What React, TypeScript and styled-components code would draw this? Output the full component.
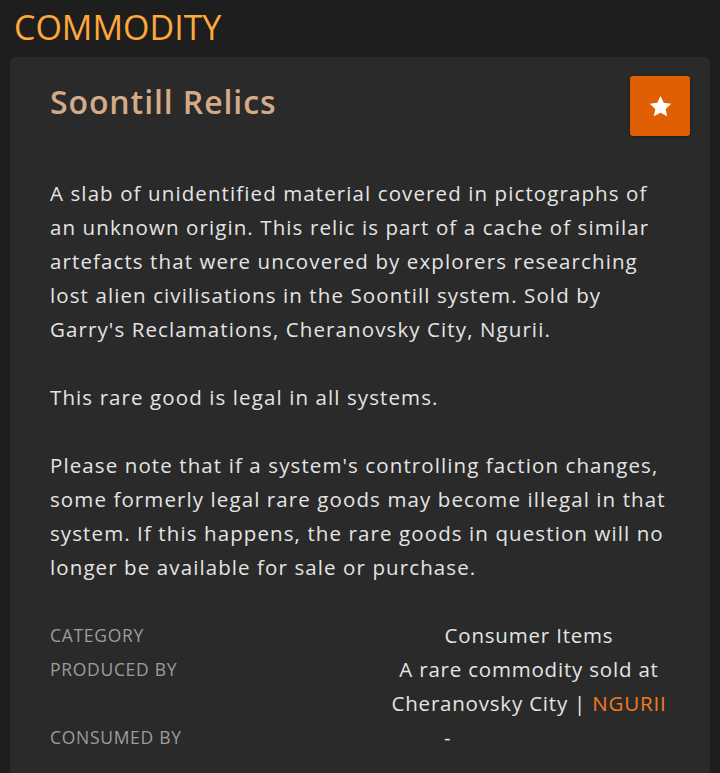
import React from "react";
import styled, {createGlobalStyle} from "styled-components";

const GlobalStyle = createGlobalStyle`
  html, body {
    margin: 0;
    padding: 0;
    background: #1e1e1e;
  }
  body {
    font-family: "Open Sans", "Noto Sans", sans-serif;
  }
`

const StarIcon = () => (
    <svg width="25" height="25" viewBox="0 0 24 24" fill="#ffffff">
        <path d="M12 1.8l3.1 6.6 7.2.9-5.3 5 1.4 7.1L12 17.9l-6.4 3.5 1.4-7.1-5.3-5 7.2-.9z"/>
    </svg>
)

const App = () => {
    const rows = [
        {label: "Category", value: <>Consumer Items</>},
        {label: "Produced by", value: <>A rare commodity sold at<br/>Cheranovsky City | <System>NGURII</System></>},
        {label: "Consumed by", value: <>-</>, offset: true},
    ]

    return (
        <>
            <GlobalStyle/>
            <Page>
                <Heading>COMMODITY</Heading>
                <Card>
                    <CardHeader>
                        <Title>Soontill Relics</Title>
                        <FavButton aria-label="favourite"><StarIcon/></FavButton>
                    </CardHeader>
                    <Body>
                        <Paragraph>
                            A slab of unidentified material covered in pictographs of an unknown origin. This relic
                            is part of a cache of similar artefacts that were uncovered by explorers researching lost
                            alien civilisations in the Soontill system. Sold by Garry's Reclamations, Cheranovsky City,
                            Ngurii.
                        </Paragraph>
                        <Paragraph>This rare good is legal in all systems.</Paragraph>
                        <Paragraph>
                            Please note that if a system's controlling faction changes, some formerly legal rare goods
                            may become illegal in that system. If this happens, the rare goods in question will no
                            longer be available for sale or purchase.
                        </Paragraph>
                        <Details>
                            {rows.map(row => (
                                <React.Fragment key={row.label}>
                                    <Label>{row.label}</Label>
                                    <Value $offset={row.offset}>{row.value}</Value>
                                </React.Fragment>
                            ))}
                        </Details>
                    </Body>
                </Card>
            </Page>
        </>
    )
}

export default App;

// Styled Components
const Page = styled.div`
  padding: 6px 10px 0 10px;
  min-height: 773px;
  box-sizing: border-box;
`
const Heading = styled.h1`
  margin: 0 0 8px 4px;
  font-family: "Open Sans", sans-serif;
  font-weight: 400;
  font-size: 34px;
  line-height: 43px;
  color: #ffa83d;
`
const Card = styled.div`
  background: #2a2a2a;
  border-radius: 6px 6px 0 0;
  padding-bottom: 40px;
`
const CardHeader = styled.div`
  display: flex;
  justify-content: space-between;
  align-items: flex-start;
  padding: 19px 20px 0 40px;
`
const Title = styled.h2`
  margin: 6px 0 0 0;
  font-size: 32px;
  line-height: 40px;
  font-weight: 600;
  letter-spacing: 0.9px;
  color: #d4ab88;
`
const FavButton = styled.button`
  width: 60px;
  height: 60px;
  border: none;
  border-radius: 3px;
  background: #e05e04;
  display: flex;
  align-items: center;
  justify-content: center;
  padding: 0;
  cursor: pointer;
  box-shadow: 0 1px 3px rgba(0, 0, 0, 0.4);
`
const Body = styled.div`
  padding: 40px 40px 0 40px;
`
const Paragraph = styled.p`
  margin: 0 0 34px 0;
  font-size: 20.5px;
  line-height: 34px;
  letter-spacing: 1.1px;
  color: #e4e4e4;
`
const Details = styled.div`
  display: grid;
  grid-template-columns: 334px 290px;
  margin-top: 15px;
`
const Label = styled.div`
  font-size: 17.5px;
  line-height: 34px;
  letter-spacing: 0.7px;
  text-transform: uppercase;
  color: #9c9c9c;
`
const Value = styled.div<{ $offset?: boolean }>`
  font-size: 20.5px;
  line-height: 34px;
  letter-spacing: 0.8px;
  white-space: nowrap;
  color: #e4e4e4;
  text-align: ${p => p.$offset ? 'left' : 'center'};
  padding-left: ${p => p.$offset ? '60px' : '0'};
`
const System = styled.span`
  color: #f47a1e;
`
